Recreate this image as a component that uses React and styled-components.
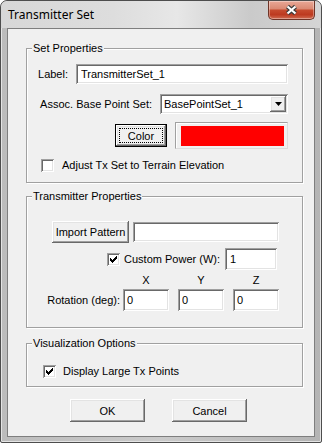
import React from 'react';
import styled, { createGlobalStyle, css } from 'styled-components';

const GlobalStyle = createGlobalStyle`
  html, body {
    margin: 0;
    padding: 0;
    background: #fff;
  }
  body {
    font-family: "Liberation Sans", Arial, sans-serif;
    font-size: 11px;
    color: #000;
  }
`;

// classic 3D edges
const sunken = css`
  box-shadow: inset 1px 1px 0 #a0a0a0, inset -1px -1px 0 #fff, inset 2px 2px 0 #696969,
    inset -2px -2px 0 #e3e3e3;
`;

const raised = css`
  box-shadow: inset -1px -1px 0 #696969, inset 1px 1px 0 #fff, inset -2px -2px 0 #a0a0a0,
    inset 2px 2px 0 #e3e3e3;
`;

const Window = styled.div`
  width: 322px;
  height: 443px;
  box-sizing: border-box;
  border: 1px solid #4d4d4d;
  border-radius: 7px 7px 2px 2px;
  background: linear-gradient(to right, #bcbcbc, #cacaca 50%, #b4b4b4);
  box-shadow: inset 0 0 0 1px #e4e4e4;
  display: flex;
  flex-direction: column;
  overflow: hidden;
`;

const TitleBar = styled.div`
  height: 27px;
  flex: none;
  display: flex;
  justify-content: space-between;
  padding: 0 6px 0 7px;
  border-radius: 6px 6px 0 0;
  background: linear-gradient(
    to right,
    #d7d7d7 0%,
    #dddddd 35%,
    #e7e7e7 55%,
    #cacaca 78%,
    #d5d5d5 100%
  );
`;

const Title = styled.span`
  font-family: "Noto Sans", "Liberation Sans", sans-serif;
  font-size: 12px;
  line-height: 27px;
  color: #000;
`;

const CloseButton = styled.div`
  width: 47px;
  height: 19px;
  box-sizing: border-box;
  border: 1px solid #6e3427;
  border-top: 0;
  border-radius: 0 0 5px 5px;
  background: linear-gradient(
    to bottom,
    #e9a897 0%,
    #db8a74 42%,
    #c64a2e 52%,
    #bd3a20 76%,
    #d06c52 100%
  );
  box-shadow: inset 0 0 0 1px rgba(255, 255, 255, 0.35);
  display: flex;
  align-items: center;
  justify-content: center;
`;

const Client = styled.div`
  flex: 1;
  margin: 0 6px 5px;
  border: 1px solid #7e7e7e;
  background: #f0f0f0;
  display: flex;
  flex-direction: column;
  padding: 19px 11px 0 18px;
`;

const Group = styled.div`
  position: relative;
  border: 1px solid #a0a0a0;
  box-shadow: inset 1px 1px 0 #fff, 1px 1px 0 #fff;
  margin-top: ${(p) => p.$mt || 0}px;
  padding: ${(p) => p.$pt}px 0 ${(p) => p.$pb}px;
  display: flex;
  flex-direction: column;
`;

const GroupTitle = styled.span`
  position: absolute;
  top: -7px;
  left: 5px;
  padding: 0 1px;
  line-height: 13px;
  background: #f0f0f0;
`;

const Row = styled.div`
  display: flex;
  align-items: center;
  justify-content: ${(p) => (p.$end ? 'flex-end' : 'flex-start')};
  gap: ${(p) => p.$gap ?? 8}px;
  height: ${(p) => p.$h}px;
  margin-top: ${(p) => p.$mt || 0}px;
  padding-left: ${(p) => p.$pl || 0}px;
  padding-right: ${(p) => p.$pr || 0}px;
`;

const Label = styled.span`
  white-space: nowrap;
  line-height: 13px;
`;

const TextBox = styled.input`
  width: ${(p) => p.$w}px;
  height: ${(p) => p.$h || 20}px;
  box-sizing: border-box;
  margin: 0;
  border: 0;
  outline: none;
  padding: 0 3px 0 ${(p) => p.$pad || 5}px;
  background: #fff;
  font: inherit;
  color: #000;
  ${sunken}
`;

const Combo = styled.div`
  width: 128px;
  height: 20px;
  box-sizing: border-box;
  padding: 2px;
  background: #fff;
  display: flex;
  align-items: center;
  justify-content: space-between;
  ${sunken}
`;

const ComboText = styled.span`
  padding-left: 2px;
`;

const ComboButton = styled.span`
  width: 16px;
  height: 16px;
  box-sizing: border-box;
  background: #f0f0f0;
  display: flex;
  align-items: center;
  justify-content: center;
  ${raised}
`;

const Button = styled.button`
  position: relative;
  width: ${(p) => p.$w || 75}px;
  height: ${(p) => p.$h || 23}px;
  box-sizing: border-box;
  margin: 0;
  padding: 0;
  border: ${(p) => (p.$default ? '1px solid #000' : '0')};
  background: #f0f0f0;
  font: inherit;
  color: #000;
  ${raised}

  ${(p) =>
    p.$default &&
    css`
      &::after {
        content: '';
        position: absolute;
        inset: 3px;
        border: 1px dotted #000;
      }
    `}
`;

const Swatch = styled.div`
  width: 113px;
  height: 27px;
  box-sizing: border-box;
  border: 1px solid;
  border-color: #a0a0a0 #dcdcdc #dcdcdc #a0a0a0;
  box-shadow: inset 1px 1px 0 #fff;
  padding: 3px 3px 2px 5px;
  background: #f0f0f0;
`;

const SwatchFill = styled.div`
  height: 100%;
  background: ${(p) => p.$color};
`;

const CheckBox = styled.span`
  width: 13px;
  height: 13px;
  flex: none;
  box-sizing: border-box;
  background: #fff;
  display: flex;
  align-items: center;
  justify-content: center;
  ${sunken}
`;

const CheckLabel = styled.span`
  display: flex;
  align-items: center;
  gap: ${(p) => p.$gap ?? 8}px;
`;

const Axis = styled.span`
  width: 46px;
  text-align: center;
  line-height: 13px;
`;

const RotationFields = styled.div`
  display: flex;
  gap: 9px;
`;

const ButtonBar = styled.div`
  display: flex;
  gap: 27px;
  margin-top: 12px;
  padding-left: 44px;
`;

const CloseGlyph = () => (
  <svg width="13" height="12" viewBox="0 0 13 12">
    <path d="M2.5 2.5 L10.5 9.5 M10.5 2.5 L2.5 9.5" stroke="#3c3c3c" strokeWidth="4.4" />
    <path d="M2.5 2.5 L10.5 9.5 M10.5 2.5 L2.5 9.5" stroke="#fff" strokeWidth="2.2" />
  </svg>
);

const CheckMark = () => (
  <svg width="7" height="7" viewBox="0 0 7 7" shapeRendering="crispEdges">
    <path d="M6 0h1v3h-1zM5 1h1v3h-1zM4 2h1v3h-1zM3 3h1v3h-1zM2 4h1v3h-1zM1 3h1v3h-1zM0 2h1v3h-1z" fill="#000" />
  </svg>
);

const Check = ({ checked, children, gap }) => (
  <CheckLabel $gap={gap}>
    <CheckBox>{checked && <CheckMark />}</CheckBox>
    <Label>{children}</Label>
  </CheckLabel>
);

const App = () => (
  <>
    <GlobalStyle />
    <Window>
      <TitleBar>
        <Title>Transmitter Set</Title>
        <CloseButton>
          <CloseGlyph />
        </CloseButton>
      </TitleBar>
      <Client>
        <Group $pt={15} $pb={10}>
          <GroupTitle>Set Properties</GroupTitle>
          <Row $end $pr={14} $h={20}>
            <Label>Label:</Label>
            <TextBox $w={212} readOnly value="TransmitterSet_1" />
          </Row>
          <Row $end $pr={14} $h={20} $mt={10}>
            <Label>Assoc. Base Point Set:</Label>
            <Combo>
              <ComboText>BasePointSet_1</ComboText>
              <ComboButton>
                <svg width="7" height="4" viewBox="0 0 7 4">
                  <path d="M0 0h7L3.5 4z" fill="#000" />
                </svg>
              </ComboButton>
            </Combo>
          </Row>
          <Row $end $pr={14} $h={27} $mt={8}>
            <Button $default $w={52}>
              Color
            </Button>
            <Swatch>
              <SwatchFill $color="#ff0000" />
            </Swatch>
          </Row>
          <Row $pl={14} $h={13} $mt={10}>
            <Check>Adjust Tx Set to Terrain Elevation</Check>
          </Row>
        </Group>

        <Group $mt={13} $pt={24} $pb={16}>
          <GroupTitle>Transmitter Properties</GroupTitle>
          <Row $pl={25} $gap={4} $h={22}>
            <Button $w={77} $h={22}>
              Import Pattern
            </Button>
            <TextBox $w={146} readOnly value="" />
          </Row>
          <Row $end $pr={25} $gap={5} $h={22} $mt={5}>
            <Check checked gap={4}>
              Custom Power (W):
            </Check>
            <TextBox $w={52} $h={22} readOnly value="1" />
          </Row>
          <Row $end $pr={23} $gap={9} $h={13} $mt={4}>
            <Axis>X</Axis>
            <Axis>Y</Axis>
            <Axis>Z</Axis>
          </Row>
          <Row $end $pr={23} $gap={3} $h={22} $mt={2}>
            <Label>Rotation (deg):</Label>
            <RotationFields>
              <TextBox $w={46} $h={22} $pad={4} readOnly value="0" />
              <TextBox $w={46} $h={22} $pad={4} readOnly value="0" />
              <TextBox $w={46} $h={22} $pad={4} readOnly value="0" />
            </RotationFields>
          </Row>
        </Group>

        <Group $mt={15} $pt={21} $pb={8}>
          <GroupTitle>Visualization Options</GroupTitle>
          <Row $pl={16} $h={13}>
            <Check checked gap={7}>
              Display Large Tx Points
            </Check>
          </Row>
        </Group>

        <ButtonBar>
          <Button>OK</Button>
          <Button>Cancel</Button>
        </ButtonBar>
      </Client>
    </Window>
  </>
);

export default App;
